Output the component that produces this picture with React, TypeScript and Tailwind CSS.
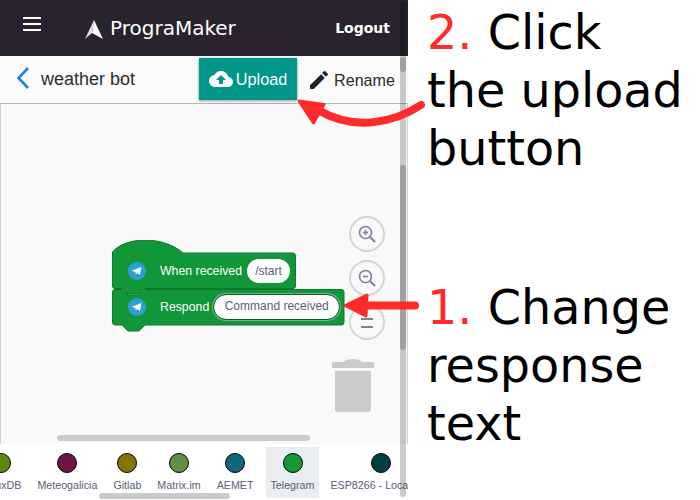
const categories = [
  { name: 'InfluxDB', color: '#5c8a12' },
  { name: 'Meteogalicia', color: '#701445' },
  { name: 'Gitlab', color: '#877400' },
  { name: 'Matrix.im', color: '#5f9145' },
  { name: 'AEMET', color: '#0f667a' },
  { name: 'Telegram', color: '#12983a', active: true },
  { name: 'ESP8266 - Local', color: '#033f42', wide: true },
];

function TelegramIcon() {
  return (
    <svg width="18" height="18" viewBox="0 0 18 18" className="shrink-0">
      <circle cx="9" cy="9" r="9" fill="#2c9fd8" />
      <path d="M3.8 8.8 L13.4 5 L12 13 L9.3 11 L7.8 12.6 L7.4 10 Z" fill="#fff" />
    </svg>
  );
}

function ZoomButton({ kind, className }: { kind: 'in' | 'out' | 'reset'; className: string }) {
  return (
    <div className={`absolute w-[36px] h-[36px] rounded-full border-2 border-[#d6d6d6] bg-[#f9f9f9] flex items-center justify-center ${className}`}>
      <svg width="20" height="20" viewBox="0 0 20 20" fill="none" stroke="#7c7f96" strokeWidth="1.6">
        {kind === 'reset' ? (
          <path d="M4 7 H16 M4 15 H16" strokeWidth="2" />
        ) : (
          <>
            <circle cx="8.5" cy="8.5" r="6" />
            <path d="M13 13 L18 18" strokeWidth="2" />
            <path d="M6 8.5 H11" />
            {kind === 'in' && <path d="M8.5 6 V11" />}
          </>
        )}
      </svg>
    </div>
  );
}

function Blocks() {
  return (
    <div className="absolute left-[111px] top-[136px] w-[234px] h-[92px] font-['Liberation_Sans',sans-serif]">
      <svg width="234" height="92" viewBox="0 0 234 92" className="absolute left-0 top-0">
        <path
          d="M0.5 12 C14 -4 52 -4 71 13 H181 Q183.5 13 183.5 16 V46 Q183.5 48.5 181 48.5 H33 L27 54 H16 L10 48.5 H3 Q0.5 48.5 0.5 46 Z"
          fill="#12963a"
          stroke="#0c7a2d"
        />
        <path
          d="M3 49.5 H10 L16 55 H27 L33 49.5 H229 Q232 49.5 232 52 V82.5 Q232 85 229 85 H33 L27 91 H16 L10 85 H3 Q0.5 85 0.5 82.5 V52 Q0.5 49.5 3 49.5 Z"
          fill="#12963a"
          stroke="#0c7a2d"
        />
      </svg>
      <div className="absolute left-[16px] top-[18px] flex items-center h-[26px]">
        <TelegramIcon />
        <span className="ml-[14px] text-white text-[12.3px] leading-none">When received</span>
        <span className="ml-[5px] w-[43px] h-[24px] bg-white rounded-full text-[#575e75] text-[12px] flex items-center justify-center">
          /start
        </span>
      </div>
      <div className="absolute left-[16px] top-[53px] flex items-center h-[28px]">
        <TelegramIcon />
        <span className="ml-[14px] text-white text-[12.3px] leading-none">Respond</span>
        <span className="ml-[5px] w-[125px] h-[24px] bg-white rounded-full outline outline-1 outline-[#0c5a22] ring-[2px] ring-[#6cb985] text-[#575e75] text-[12px] flex items-center justify-center pb-[3px]">
          Command received
        </span>
      </div>
    </div>
  );
}

function Arrows() {
  return (
    <svg width="700" height="500" viewBox="0 0 700 500" className="absolute left-0 top-0 pointer-events-none">
      <path
        d="M421 105 C395 122 355 132 318 110"
        fill="none"
        stroke="#ff2a2a"
        strokeWidth="8"
        strokeLinecap="round"
      />
      <path
        d="M299 101 L324 104.5 L313.5 123 Z"
        fill="#ff2a2a"
        stroke="#ff2a2a"
        strokeWidth="3"
        strokeLinejoin="round"
      />
      <path d="M360 305.5 H415" stroke="#ff2a2a" strokeWidth="8" strokeLinecap="round" />
      <path
        d="M345 305.5 L367 295 L366 316 Z"
        fill="#ff2a2a"
        stroke="#ff2a2a"
        strokeWidth="3"
        strokeLinejoin="round"
      />
    </svg>
  );
}

export default function App() {
  return (
    <div className="relative w-[700px] h-[500px] overflow-hidden bg-white flex">
      {/* Left: editor screenshot */}
      <div className="relative w-[408px] h-[500px] shrink-0 flex flex-col bg-white overflow-hidden">
        <header className="h-[56px] bg-[#28232f] flex items-center text-white shrink-0 font-['DejaVu_Sans',sans-serif]">
          <div className="ml-[23px] w-[18px] flex flex-col gap-[4px] -mt-[8px]">
            <span className="h-[2px] bg-white" />
            <span className="h-[2px] bg-white" />
            <span className="h-[2px] bg-white" />
          </div>
          <svg width="18" height="20" viewBox="0 0 18 20" className="ml-[44px] mt-[3px]">
            <path d="M9 0 L18 19 L7 13 Z" fill="#fff" />
            <path d="M9 0 L0 19 L7 13 Z" fill="#e2e2e2" />
          </svg>
          <span className="ml-[7px] text-[20px] leading-none">PrograMaker</span>
          <span className="ml-auto mr-[18px] text-[14px] font-bold">Logout</span>
        </header>

        <div className="h-[48px] shrink-0 bg-[#fbfbfb] flex items-start font-['Liberation_Sans',sans-serif] border-b border-[#b8b8b8]">
          <svg width="14" height="24" viewBox="0 0 14 24" fill="none" stroke="#1a82f0" strokeWidth="2.6" className="ml-[16px] mt-[10px]">
            <path d="M12 2 L2.5 12 L12 22" />
          </svg>
          <span className="ml-[11px] mt-[11px] text-[18px] leading-[24px] text-[#2b2b2b]">weather bot</span>
          <button className="ml-[64px] mt-[2px] w-[98px] h-[42px] bg-[#009688] text-white flex items-center justify-center gap-[3px] text-[16.3px] shadow-[0_1px_3px_rgba(0,0,0,0.4)]">
            <svg width="24" height="24" viewBox="0 0 24 24" fill="#fff">
              <path d="M19.35 10.04C18.67 6.59 15.64 4 12 4 9.11 4 6.6 5.64 5.35 8.04 2.34 8.36 0 10.91 0 14c0 3.31 2.69 6 6 6h13c2.76 0 5-2.24 5-5 0-2.64-2.05-4.78-4.65-4.96zM14 13v4h-4v-4H7l5-5 5 5h-3z" />
            </svg>
            Upload
          </button>
          <div className="ml-[10px] mt-[12px] flex items-center gap-[3px] text-[16.1px] text-[#2b2b2b]">
            <svg width="24" height="24" viewBox="0 0 24 24" fill="#222">
              <path d="M3 17.25V21h3.75L17.81 9.94l-3.75-3.75L3 17.25zM20.71 7.04a1 1 0 0 0 0-1.41l-2.34-2.34a1 1 0 0 0-1.41 0l-1.83 1.83 3.75 3.75 1.83-1.83z" />
            </svg>
            Rename
          </div>
        </div>

        {/* Workspace canvas */}
        <div className="relative flex-1 bg-[#f9f9f9] border-l border-r border-[#d0d0d0]">
          <Blocks />
          <ZoomButton kind="in" className="left-[348px] top-[112px]" />
          <ZoomButton kind="out" className="left-[348px] top-[156px]" />
          <ZoomButton kind="reset" className="left-[348px] top-[200px]" />
          <svg width="42" height="54" viewBox="0 0 42 54" className="absolute left-[331px] top-[255px]">
            <path d="M0 3 H11 Q15 0 21 0 Q27 0 31 3 H42 V9 H0 Z" fill="#cbcbcb" />
            <path d="M3 12 H39 V50 Q39 53 36 53 H6 Q3 53 3 50 Z" fill="#cbcbcb" />
          </svg>
          <div className="absolute left-[56px] bottom-[3px] w-[253px] h-[6px] rounded-full bg-[#cbcbcb]" />
        </div>

        {/* Toolbox categories */}
        <div className="relative h-[56px] shrink-0 bg-white flex items-start font-['Liberation_Sans',sans-serif] overflow-hidden pt-[3px]">
          <div className="flex -ml-[27px]">
            {categories.map((c) => (
              <div
                key={c.name}
                className={`h-[51px] shrink-0 flex flex-col items-center whitespace-nowrap ${
                  c.active ? 'bg-[#e9eef2] px-[5px] ml-[4px] mr-[3px]' : 'px-[8px]'
                } ${c.wide ? 'w-[118px]' : ''}`}
              >
                <span className="mt-[6px] w-[20px] h-[20px] rounded-full border border-black" style={{ backgroundColor: c.color }} />
                <span className={`mt-[4px] text-[10.7px] text-[#575e75] ${c.wide ? 'self-start' : ''}`}>{c.name}</span>
              </div>
            ))}
          </div>
          <div className="absolute left-[99px] bottom-[1px] w-[131px] h-[6px] rounded-full bg-[#cbcbcb]" />
        </div>

        {/* Page scrollbar */}
        <div className="absolute right-[2px] top-[2px] bottom-[3px] w-[6px] rounded-full bg-black/20" />
        <div className="absolute right-[2px] top-[57px] w-[6px] h-[15px] rounded-full bg-black/20" />
        <div className="absolute right-[2px] top-[165px] w-[6px] h-[185px] rounded-full bg-black/20" />
      </div>

      {/* Right: instructions */}
      <div className="flex-1 pl-[19px] pt-[4px] font-['DejaVu_Sans',sans-serif] text-[47.7px] leading-[58px] text-black flex flex-col gap-[101px]">
        <p>
          <span className="text-[#ff2a2a]">2.</span> Click<br />the upload<br />button
        </p>
        <p>
          <span className="text-[#ff2a2a]">1.</span> Change<br />response<br />text
        </p>
      </div>

      <Arrows />
    </div>
  );
}
